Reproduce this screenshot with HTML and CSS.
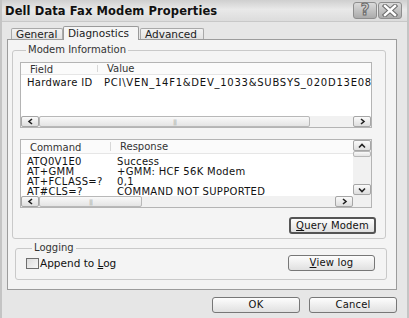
FILE: index.html
```html
<!DOCTYPE html>
<html lang="en">
<head>
  <meta charset="UTF-8">
  <title>Dell Data Fax Modem Properties</title>
  <link rel="stylesheet" href="styles.css">
</head>
<body>

<div class="dialog">

  <!-- Title bar -->
  <div class="titlebar">
    <span class="title">Dell Data Fax Modem Properties</span>
    <div class="caption-btns">
      <div class="cap-btn help">?</div>
      <div class="cap-btn close">
        <svg width="16" height="13" viewBox="0 0 16 13">
          <path d="M3 2 L13 11 M13 2 L3 11" stroke="#6a6a6a" stroke-width="4.4" stroke-linecap="square"/>
          <path d="M3 2 L13 11 M13 2 L3 11" stroke="#fff" stroke-width="2.4" stroke-linecap="square"/>
        </svg>
      </div>
    </div>
  </div>

  <div class="body">
    <div class="tabs">
      <div class="tab">General</div>
      <div class="tab active">Diagnostics</div>
      <div class="tab">Advanced</div>
    </div>

    <div class="panel">
      <fieldset class="group group-info">
        <legend>Modem Information</legend>

        <!-- Field / Value list -->
        <div class="list list-info">
          <div class="list-main">
            <div class="list-head">
              <span class="col c-field">Field</span>
              <span class="col">Value</span>
            </div>
            <div class="list-rows">
              <div class="list-row"><span class="col c-field">Hardware ID</span><span class="col">PCI\VEN_14F1&amp;DEV_1033&amp;SUBSYS_020D13E08</span></div>
            </div>
            <div class="hscroll">
              <div class="sb-btn"><svg width="7" height="7" viewBox="0 0 7 7"><path d="M5 1 L2 3.5 L5 6" fill="none" stroke="#222" stroke-width="1.6"/></svg></div>
              <div class="sb-thumb h-thumb-1"><span class="grip">|||</span></div>
              <div class="sb-track"></div>
              <div class="sb-btn"><svg width="7" height="7" viewBox="0 0 7 7"><path d="M2 1 L5 3.5 L2 6" fill="none" stroke="#222" stroke-width="1.6"/></svg></div>
            </div>
          </div>
        </div>

        <!-- Command / Response list -->
        <div class="list list-cmd">
          <div class="list-main">
            <div class="list-head">
              <span class="col c-cmd">Command</span>
              <span class="col">Response</span>
            </div>
            <div class="list-rows">
              <div class="list-row"><span class="col c-cmd">ATQ0V1E0</span><span class="col">Success</span></div>
              <div class="list-row"><span class="col c-cmd">AT+GMM</span><span class="col">+GMM: HCF 56K Modem</span></div>
              <div class="list-row"><span class="col c-cmd">AT+FCLASS=?</span><span class="col">0,1</span></div>
              <div class="list-row"><span class="col c-cmd">AT#CLS=?</span><span class="col">COMMAND NOT SUPPORTED</span></div>
            </div>
            <div class="hscroll">
              <div class="sb-btn"><svg width="7" height="7" viewBox="0 0 7 7"><path d="M5 1 L2 3.5 L5 6" fill="none" stroke="#222" stroke-width="1.6"/></svg></div>
              <div class="sb-thumb h-thumb-2"><span class="grip">|||</span></div>
              <div class="sb-track"></div>
              <div class="sb-btn"><svg width="7" height="7" viewBox="0 0 7 7"><path d="M2 1 L5 3.5 L2 6" fill="none" stroke="#222" stroke-width="1.6"/></svg></div>
            </div>
          </div>
          <div class="vscroll">
            <div class="sb-btn v-btn"><svg width="8" height="6" viewBox="0 0 8 6"><path d="M1 4.5 L4 1.5 L7 4.5" fill="none" stroke="#222" stroke-width="1.6"/></svg></div>
            <div class="sb-thumb v-thumb"></div>
            <div class="sb-track"></div>
            <div class="sb-btn v-btn"><svg width="8" height="6" viewBox="0 0 8 6"><path d="M1 1.5 L4 4.5 L7 1.5" fill="none" stroke="#222" stroke-width="1.6"/></svg></div>
            <div class="corner"></div>
          </div>
        </div>

        <div class="btn-row">
          <button class="btn btn-default"><u>Q</u>uery Modem</button>
        </div>
      </fieldset>

      <fieldset class="group group-log">
        <legend>Logging</legend>
        <div class="log-row">
          <label class="check"><span class="box"></span><span>Append to <u>L</u>og</span></label>
          <button class="btn"><u>V</u>iew log</button>
        </div>
      </fieldset>
    </div>

    <div class="footer">
      <button class="btn btn-foot">OK</button>
      <button class="btn btn-foot">Cancel</button>
    </div>
  </div>

</div>

</body>
</html>
```

FILE: styles.css
```css
* {
  box-sizing: border-box;
}

html, body {
  margin: 0;
  padding: 0;
  background: #e3e3e3;
  font-family: 'DejaVu Sans', Verdana, sans-serif;
  font-size: 10px;
  color: #111;
}

.dialog {
  width: 409px;
  height: 318px;
  background: #e6e6e6;
  border-left: 2px solid #c4c4c4;
  border-right: 2px solid #c4c4c4;
  overflow: hidden;
}

/* title bar */
.titlebar {
  height: 22px;
  display: flex;
  align-items: center;
  justify-content: space-between;
  padding: 0 5px 0 3px;
  background: linear-gradient(to bottom, #cfcfcf 0%, #e9e9e9 45%, #dcdcdc 100%);
  border-bottom: 1px solid #c8c8c8;
}

.title {
  font-weight: bold;
  font-size: 11.5px;
  letter-spacing: 0.1px;
  color: #111;
}

.caption-btns {
  display: flex;
  gap: 1px;
}

.cap-btn {
  width: 24px;
  height: 17px;
  border: 1px solid #8e8e8e;
  border-radius: 3px;
  background: linear-gradient(to bottom, #dadada, #ababab);
  display: flex;
  align-items: center;
  justify-content: center;
}

.help {
  font-size: 15px;
  font-weight: bold;
  color: #d4d4d4;
  -webkit-text-stroke: 1px #6a6a6a;
  line-height: 1;
}

/* body */
.body {
  padding: 4px 10px 0 5px;
}

.tabs {
  display: flex;
  align-items: flex-end;
  height: 13px;
  padding-left: 4px;
  position: relative;
  z-index: 1;
}

.tab {
  height: 11px;
  padding: 0 4px;
  font-size: 10.5px;
  line-height: 11px;
  background: linear-gradient(to bottom, #f2f2f2, #e2e2e2);
  border: 1px solid #a9a9a9;
  border-bottom: none;
  border-radius: 2px 2px 0 0;
  color: #222;
}

.tab:first-child {
  width: 52px;
}

.tab.active {
  height: 14px;
  width: 76px;
  background: #f5f5f5;
  margin-bottom: -1px;
  padding-top: 1px;
  border-color: #9a9a9a;
}

.tab:last-child {
  width: 64px;
  margin-left: 1px;
}

.panel {
  height: 251px;
  background: #f4f4f4;
  border: 1px solid #9c9c9c;
  padding: 4px 10px 0 4px;
}

/* group boxes */
.group {
  margin: 0;
  border: 1px solid #c9c9c9;
  border-radius: 3px;
  min-width: 0;
}

.group legend {
  padding: 0 2px;
  margin-left: 6px;
  font-size: 10px;
  line-height: 12px;
  color: #333;
}

.group-info {
  height: 195px;
  padding: 0 13px 0 7px;
}

.group-log {
  margin-top: 3px;
  margin-left: 3px;
  margin-right: -1px;
  height: 38px;
  padding: 0 10px 0 10px;
}

/* list views */
.list {
  display: flex;
  background: #fff;
  border: 1px solid #b4b4b4;
}

.list-info {
  margin-top: 6px;
  height: 66px;
}

.list-cmd {
  margin-top: 11px;
  height: 69px;
}

.list-main {
  flex: 1;
  display: flex;
  flex-direction: column;
  min-width: 0;
}

.list-head {
  display: flex;
  height: 12px;
  line-height: 12px;
  background: #fbfbfb;
  border-bottom: 1px solid #e6e6e6;
  color: #333;
  flex-shrink: 0;
}

.list-cmd .list-head {
  height: 14px;
  line-height: 14px;
}

.list-head .col {
  padding-left: 9px;
}

.list-head .c-field,
.list-head .c-cmd {
  border-right: 1px solid #d8d8d8;
  margin: 2px 0;
  line-height: 10px;
}

.list-cmd .list-head .c-cmd {
  line-height: 12px;
}

.list-rows {
  flex: 1;
  padding-top: 2px;
  overflow: hidden;
}

.list-cmd .list-rows {
  padding-top: 3px;
}

.list-row {
  display: flex;
  height: 10px;
  line-height: 10px;
  white-space: nowrap;
  color: #111;
  letter-spacing: 0.3px;
}

.list-info .list-row {
  height: 12px;
  line-height: 12px;
}

.list-info .list-row .col:last-child {
  letter-spacing: 0.75px;
}

.list-row .col {
  padding-left: 6px;
}

.c-field {
  width: 77px;
  flex-shrink: 0;
}

.c-cmd {
  width: 90px;
  flex-shrink: 0;
}

/* scrollbars */
.hscroll {
  display: flex;
  height: 11px;
  flex-shrink: 0;
  background: #efefef;
}

.sb-btn {
  width: 18px;
  flex-shrink: 0;
  border: 1px solid #a6a6a6;
  border-radius: 2px;
  background: linear-gradient(to bottom, #fafafa, #dedede);
  display: flex;
  align-items: center;
  justify-content: center;
}

.sb-thumb {
  border: 1px solid #b8b8b8;
  border-radius: 2px;
  background: linear-gradient(to bottom, #f9f9f9, #e4e4e4);
  display: flex;
  align-items: center;
  justify-content: center;
}

.grip {
  font-size: 6px;
  color: #aaa;
  letter-spacing: -1px;
}

.h-thumb-1 {
  width: 271px;
}

.h-thumb-2 {
  width: 103px;
}

.sb-track {
  flex: 1;
  background: #f1f1f1;
}

.vscroll {
  width: 18px;
  display: flex;
  flex-direction: column;
  background: #efefef;
}

.v-btn {
  width: 18px;
  height: 11px;
}

.v-thumb {
  height: 6px;
}

.corner {
  height: 12px;
  background: #f0f0f0;
}

/* buttons */
.btn {
  font-family: 'DejaVu Sans', Verdana, sans-serif;
  font-size: 10px;
  color: #111;
  height: 16px;
  padding: 0;
  border: 1px solid #777;
  border-radius: 3px;
  background: linear-gradient(to bottom, #fdfdfd, #e0e0e0);
  line-height: 14px;
  letter-spacing: 0.2px;
}

.btn-row {
  display: flex;
  justify-content: flex-end;
  margin-top: 9px;
  margin-right: -4px;
}

.btn-default {
  width: 87px;
  height: 17px;
  border: 2px solid #555;
  line-height: 13px;
}

.log-row {
  display: flex;
  align-items: center;
  justify-content: space-between;
  padding-top: 1px;
  padding-right: 1px;
}

.check {
  display: flex;
  align-items: center;
  gap: 1px;
  color: #111;
  font-size: 10.5px;
}

.box {
  width: 13px;
  height: 11px;
  border: 1px solid #6e6e6e;
  background: linear-gradient(135deg, #dcdcdc, #f7f7f7);
}

.log-row .btn {
  width: 87px;
}

.footer {
  display: flex;
  justify-content: flex-end;
  gap: 9px;
  margin-top: 7px;
  padding-right: 0;
}

.btn-foot {
  width: 88px;
}
```
